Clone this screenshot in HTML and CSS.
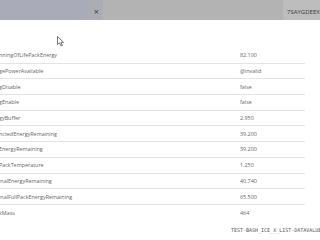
FILE: index.html
```html
<!DOCTYPE html>
<html lang="en">
<head>
    <meta charset="UTF-8">
    <meta name="viewport" content="width=device-width, initial-scale=1.0">
    <title>Data Values</title>
    <link rel="stylesheet" href="styles.css">
</head>
<body>
    <div class="topbar">
        <div class="tab">
            <span class="tab-close">&times;</span>
        </div>
        <div class="vin">7SAYGDEEX</div>
    </div>

    <div class="values">
        <div class="row"><span class="name">nningOfLifePackEnergy</span><span class="val">82.100</span></div>
        <div class="row"><span class="name">gePowerAvailable</span><span class="val">@invalid</span></div>
        <div class="row"><span class="name">gDisable</span><span class="val">false</span></div>
        <div class="row"><span class="name">gEnable</span><span class="val">false</span></div>
        <div class="row"><span class="name">gyBuffer</span><span class="val">2.950</span></div>
        <div class="row"><span class="name">nctedEnergyRemaining</span><span class="val">39.200</span></div>
        <div class="row"><span class="name">EnergyRemaining</span><span class="val">39.200</span></div>
        <div class="row"><span class="name">PackTemperature</span><span class="val">1.250</span></div>
        <div class="row"><span class="name">inalEnergyRemaining</span><span class="val">40.740</span></div>
        <div class="row"><span class="name">inalFullPackEnergyRemaining</span><span class="val">65.500</span></div>
        <div class="row last"><span class="name">kMass</span><span class="val">464</span></div>
    </div>

    <div class="footer">TEST-BASH_ICE_X_LIST-DATAVALUE</div>

    <svg class="cursor" width="8" height="11" viewBox="0 0 8 11">
        <path d="M0.5 0.5 L0.5 8.5 L2.5 6.8 L4 10 L5.3 9.4 L3.9 6.3 L6.5 6.3 Z" fill="#fff" stroke="#555" stroke-width="0.8"/>
    </svg>
</body>
</html>
```

FILE: styles.css
```css
body {
    margin: 0;
    width: 320px;
    height: 240px;
    overflow: hidden;
    background-color: #ffffff;
    font-family: "Open Sans", Arial, sans-serif;
    color: #666666;
    position: relative;
}
.topbar {
    display: flex;
    align-items: center;
    justify-content: space-between;
    height: 20px;
    background-color: #b3b3b3;
}
.tab {
    width: 103px;
    height: 20px;
    display: flex;
    align-items: center;
    justify-content: flex-end;
    background: linear-gradient(to right, #a9abb9 0, #a9abb9 88px, #acadb4 88px);
}
.tab-close {
    font-size: 9px;
    line-height: 1;
    color: #3c3c44;
    margin-right: 4px;
    margin-top: 2px;
}
.vin {
    height: 20px;
    width: 37px;
    padding: 3px 0 0 4px;
    display: flex;
    align-items: center;
    background-color: #bdbdbd;
    font-size: 6px;
    color: #3a3a3a;
    white-space: nowrap;
    overflow: hidden;
    box-sizing: border-box;
}
.values {
    margin-top: 28px;
    width: 305px;
}
.row {
    display: grid;
    grid-template-columns: 240px 1fr;
    align-items: center;
    height: 15.7px;
    box-sizing: border-box;
    border-bottom: 1px solid #e3e3e3;
    font-size: 5.4px;
    white-space: nowrap;
}
.row.last {
    border-bottom: none;
}
.name {
    margin-left: -1px;
}
.footer {
    margin-top: 6px;
    padding-left: 231px;
    font-family: "DejaVu Sans Mono", monospace;
    font-size: 5px;
    color: #555555;
    white-space: nowrap;
}
.cursor {
    position: absolute;
    left: 57px;
    top: 36px;
}
```
